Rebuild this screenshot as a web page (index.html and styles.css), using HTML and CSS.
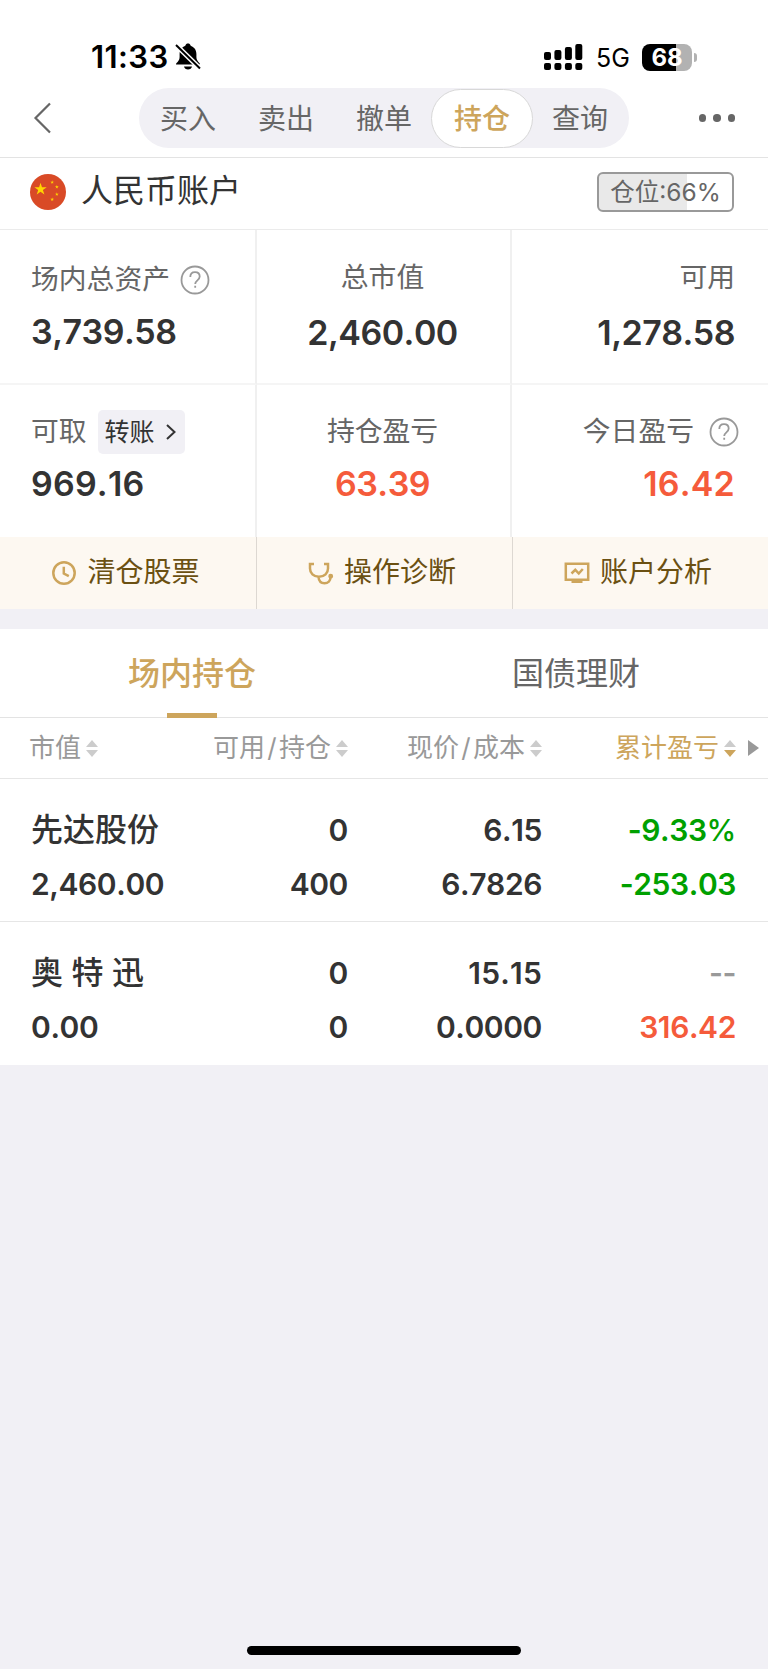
FILE: index.html
```html
<!DOCTYPE html>
<html lang="zh-CN">
<head>
    <meta charset="UTF-8">
    <meta name="viewport" content="width=device-width, initial-scale=1.0">
    <title>持仓</title>
    <link rel="stylesheet" href="styles.css">
</head>
<body>
    <header>
        <div class="status-bar">
            <div class="status-left">
                <span class="time">11:33</span>
                <svg class="bell" width="26" height="28" viewBox="0 0 26 28">
                    <path d="M1 21.500c0-2 3.600-3 3.600-7.500V11C4.600 6 8 3.600 10.300 2.800 10.800 1 11.700.5 13 .5s2.200.5 2.700 2.300C18 3.600 21.400 6 21.400 11v3c0 4.500 3.600 5.500 3.600 7.500z"/>
                    <path d="M9 23.500h8c-.4 1.800-2 3-4 3s-3.600-1.200-4-3z"/>
                    <path d="M1 2l24 23.500" stroke="#fff" stroke-width="5"/>
                    <path d="M1 2l24 23.500" stroke="#000" stroke-width="2"/>
                </svg>
            </div>
            <div class="status-right">
                <svg class="signal" width="40" height="28" viewBox="0 0 40 28">
                    <rect x="0" y="9" width="7" height="8" rx="2"/>
                    <rect x="10.400" y="7" width="7" height="10" rx="2"/>
                    <rect x="20.900" y="4" width="7" height="13" rx="2"/>
                    <rect x="31.300" y="1" width="7" height="16" rx="2"/>
                    <rect x="0" y="20" width="7" height="7" rx="2"/>
                    <rect x="10.400" y="20" width="7" height="7" rx="2"/>
                    <rect x="20.900" y="20" width="7" height="7" rx="2"/>
                    <rect x="31.300" y="20" width="7" height="7" rx="2"/>
                </svg>
                <span class="network">5G</span>
                <span class="battery">68</span>
                <span class="battery-tip"></span>
            </div>
        </div>

        <nav>
            <a href="#" class="back">
                <svg width="20" height="32" viewBox="0 0 20 32">
                    <path d="M17 1.500L2.500 16 17 30.500" fill="none" stroke="#666" stroke-width="2.200"/>
                </svg>
            </a>
            <ul>
                <li><a href="#">买入</a></li>
                <li><a href="#">卖出</a></li>
                <li><a href="#">撤单</a></li>
                <li class="active"><a href="#">持仓</a></li>
                <li><a href="#">查询</a></li>
            </ul>
            <div class="more"><i></i><i></i><i></i></div>
        </nav>
    </header>

    <div class="account">
        <svg class="flag" width="36" height="36" viewBox="0 0 36 36">
            <circle cx="18" cy="18" r="18" fill="#d94a26"/>
            <g fill="#ffd500">
                <path id="star" d="M10.500 8.700l1.500 4.500h4.700l-3.800 2.800 1.500 4.500-3.900-2.800-3.800 2.800 1.500-4.500-3.800-2.800h4.700z"/>
                <use href="#star" transform="translate(19 3.700) scale(.3)"/>
                <use href="#star" transform="translate(23.700 8.400) scale(.3)"/>
                <use href="#star" transform="translate(23.700 15.700) scale(.3)"/>
                <use href="#star" transform="translate(19 20.900) scale(.3)"/>
            </g>
        </svg>
        <span class="account-name">人民币账户</span>
        <span class="position">仓位:66%</span>
    </div>

    <div class="assets">
        <div class="asset">
            <div class="label">场内总资产
                <svg class="help" width="30" height="30" viewBox="0 0 30 30">
                    <circle cx="15" cy="15" r="13.500"/>
                    <path d="M10.300 12c0-3 2-4.800 4.700-4.800s4.700 1.700 4.700 4.400c0 3.600-4.500 3.900-4.500 7.400M15.200 20.800v2"/>
                </svg>
            </div>
            <div class="value">3,739.58</div>
        </div>
        <div class="asset center low">
            <div class="label">总市值</div>
            <div class="value">2,460.00</div>
        </div>
        <div class="asset right low">
            <div class="label">可用</div>
            <div class="value">1,278.58</div>
        </div>
        <div class="asset">
            <div class="label">可取
                <a href="#" class="transfer">转账
                    <svg width="10" height="18" viewBox="0 0 10 18">
                        <path d="M1 2l7.500 7L1 16" fill="none" stroke="#333" stroke-width="2"/>
                    </svg>
                </a>
            </div>
            <div class="value wide">969.16</div>
        </div>
        <div class="asset center">
            <div class="label">持仓盈亏</div>
            <div class="value red">63.39</div>
        </div>
        <div class="asset right">
            <div class="label">今日盈亏
                <svg class="help" width="30" height="30" viewBox="0 0 30 30">
                    <circle cx="15" cy="15" r="13.500"/>
                    <path d="M10.300 12c0-3 2-4.800 4.700-4.800s4.700 1.700 4.700 4.400c0 3.600-4.500 3.900-4.500 7.400M15.200 20.800v2"/>
                </svg>
            </div>
            <div class="value red wide">16.42</div>
        </div>
    </div>

    <div class="actions">
        <a href="#">
            <svg width="26" height="26" viewBox="0 0 26 26">
                <circle cx="13" cy="13" r="10.700"/>
                <path d="M12.800 6.800v6.700l5 2.700"/>
            </svg>
            清仓股票
        </a>
        <a href="#">
            <svg width="26" height="26" viewBox="0 0 26 26">
                <path d="M6 4H2v4.500c0 4.800 3.500 8.300 9 8.300s9-3.500 9-8.300V4h-4M10.500 17c.3 4 2.500 6.300 6 6.300s6-2.500 6-6.300"/>
                <circle cx="22.700" cy="16.300" r="1.200" fill="#cda55c"/>
            </svg>
            操作诊断
        </a>
        <a href="#">
            <svg width="26" height="26" viewBox="0 0 26 26">
                <path d="M1.800 3.700h22.400v16H1.800zM7.500 13.500l3.800-3.700 3.500 3.700 4-4.500"/>
                <path d="M7.500 20h11v3h-11z" fill="#cda55c" stroke="none"/>
            </svg>
            账户分析
        </a>
    </div>

    <div class="tabs">
        <a href="#" class="active">场内持仓</a>
        <a href="#">国债理财</a>
    </div>

    <div class="holdings">
        <div class="row head">
            <div>市值<span class="sort"></span></div>
            <div>可用<b>/</b>持仓<span class="sort"></span></div>
            <div>现价<b>/</b>成本<span class="sort"></span></div>
            <div class="gold">累计盈亏<span class="sort down"></span></div>
            <span class="next"></span>
        </div>
        <div class="row">
            <div><p class="name">先达股份</p><p>2,460.00</p></div>
            <div><p>0</p><p>400</p></div>
            <div><p>6.15</p><p>6.7826</p></div>
            <div class="green"><p>-9.33<span class="percent">%</span></p><p>-253.03</p></div>
        </div>
        <div class="row">
            <div><p class="name">奥 特 迅</p><p>0.00</p></div>
            <div><p>0</p><p>0</p></div>
            <div><p class="wide">15.15</p><p>0.0000</p></div>
            <div><p class="gray">--</p><p class="red">316.42</p></div>
        </div>
    </div>

    <div class="home-bar"></div>
</body>
</html>
```
FILE: styles.css
```css
* {
    box-sizing: border-box;
}

body {
    font-family: Inter, "Noto Sans CJK SC", sans-serif;
    line-height: 1.2;
    margin: 0;
    padding: 0;
    min-height: 1669px;
    display: flex;
    flex-direction: column;
    background-color: #f1f0f5;
    color: #333;
}

a {
    color: inherit;
    text-decoration: none;
}

svg {
    flex: none;
    display: block;
}

header {
    height: 158px;
    background-color: #fff;
    border-bottom: 1px solid #e3e3e3;
}

.status-bar {
    height: 88px;
    padding: 26px 71px 0 91px;
    display: flex;
    justify-content: space-between;
    align-items: center;
    color: #000;
}

.status-left,
.status-right {
    display: flex;
    align-items: center;
}

.time {
    width: 84px;
    font-size: 31px;
    font-weight: 600;
    letter-spacing: 0.4px;
}

.network {
    width: 46px;
    margin-left: 12px;
    padding-top: 1px;
    font-size: 25px;
}

.battery {
    width: 50px;
    height: 27px;
    border-radius: 8px;
    background: linear-gradient(to right, #000 69%, #b2b2b2 69%);
    color: #fff;
    font-size: 24px;
    font-weight: 700;
    line-height: 28px;
    text-align: center;
}

.battery-tip {
    width: 3px;
    height: 9px;
    margin-left: 2px;
    border-radius: 0 3px 3px 0;
    background-color: #b2b2b2;
}

nav {
    height: 60px;
    padding: 0 33px;
    display: flex;
    justify-content: space-between;
    align-items: center;
}

.back {
    width: 106px;
}

nav ul {
    list-style-type: none;
    margin: 0;
    padding: 0;
    width: 490px;
    height: 60px;
    border-radius: 30px;
    display: flex;
    justify-content: center;
    background-color: #f1f0f5;
}

nav ul li {
    width: 98px;
    line-height: 62px;
    text-align: center;
    font-size: 28px;
    color: #666;
}

nav ul li.active {
    width: 102px;
    height: 59px;
    margin: 1px -2px 0;
    border: 1px solid #d8d8d8;
    border-radius: 30px;
    line-height: 58px;
    background-color: #fff;
    color: #cda55c;
    font-weight: 500;
}

.more {
    width: 106px;
    display: flex;
    justify-content: flex-end;
    gap: 7px;
}

.more i {
    width: 7.500px;
    height: 7.500px;
    border-radius: 50%;
    background-color: #666;
}

.account {
    height: 71px;
    padding: 0 34px 4px 30px;
    display: flex;
    align-items: center;
    background-color: #fff;
}

.account-name {
    margin-left: 15px;
    font-size: 32px;
}

.position {
    width: 137px;
    height: 40px;
    margin-left: auto;
    border: 2px solid #999;
    border-radius: 6px;
    background: linear-gradient(to right, #e9e9e9 66%, #fff 66%);
    color: #666;
    font-size: 24.500px;
    line-height: 36px;
    text-align: center;
}

.assets {
    display: grid;
    grid-template-columns: 257px 255px 256px;
    grid-template-rows: 155px 152px;
    background-color: #fff;
    border-top: 1px solid #ebebeb;
}

.asset {
    padding: 26px 33px 0 31px;
    border-right: 2px solid #f0f0f0;
    display: flex;
    flex-direction: column;
}

.asset:nth-child(3n) {
    border-right: none;
}

.asset:nth-child(-n+3) {
    border-bottom: 2px solid #f5f5f5;
    padding-top: 29px;
}

.asset .label {
    height: 42px;
    display: flex;
    align-items: center;
    font-size: 27.800px;
    white-space: nowrap;
    color: #666;
}

.asset .value {
    margin-top: 11px;
    font-size: 34px;
    line-height: 40px;
    font-weight: 600;
    font-kerning: none;
    letter-spacing: -0.5px;
}

.asset.low:nth-child(-n+3) {
    padding-top: 27px;
}

.low .value {
    margin-top: 14px;
}

.asset .wide,
.row .wide {
    letter-spacing: 0.2px;
}

.asset.center {
    align-items: center;
    padding-left: 0;
    padding-right: 2px;
}

.right {
    align-items: flex-end;
}

.right .help {
    margin-left: 15px;
    margin-right: -4px;
}

.help {
    margin-left: 10px;
    fill: none;
    stroke: #999;
    stroke-width: 1.800;
}

.transfer {
    width: 87px;
    height: 44px;
    margin-left: 11px;
    padding: 0 9px 0 7px;
    display: flex;
    justify-content: space-between;
    align-items: center;
    border-radius: 5px;
    background-color: #f1f0f5;
    color: #333;
    font-size: 25px;
}

.red {
    color: #f55b3b;
}

.green {
    color: #00a000;
}

.gold {
    color: #cda55c;
}

.gray {
    color: #999;
}

.actions {
    height: 72px;
    display: grid;
    grid-template-columns: 257px 256px 255px;
    background-color: #fdf8f1;
    color: #6b5012;
}

.actions a {
    display: flex;
    align-items: center;
    justify-content: center;
    gap: 10px;
    padding-right: 5px;
    border-right: 1px solid #ddd8d2;
    font-size: 28px;
}

.actions a:last-child {
    border-right: none;
}

.actions svg {
    fill: none;
    stroke: #cda55c;
    stroke-width: 2.500;
}

.tabs {
    height: 89px;
    margin-top: 20px;
    display: flex;
    background-color: #fff;
    border-bottom: 1px solid #e3e3e3;
}

.tabs a {
    flex: 1;
    position: relative;
    line-height: 90px;
    text-align: center;
    font-size: 32px;
    color: #666;
}

.tabs a.active {
    color: #cda55c;
    font-weight: 500;
}

.tabs a.active::after {
    content: "";
    position: absolute;
    left: 167px;
    bottom: -1px;
    width: 50px;
    height: 5px;
    background-color: #cda55c;
}

.row {
    height: 143px;
    padding: 24px 32px 0 31px;
    display: grid;
    grid-template-columns: 150px 167px 194px 194px;
    text-align: right;
    background-color: #fff;
    border-bottom: 1px solid #e6e6e6;
}

.row > div:first-child {
    text-align: left;
}

.row p {
    height: 54px;
    margin: 0;
    font-size: 30px;
    line-height: 54px;
    font-weight: 600;
    font-kerning: none;
    letter-spacing: -0.4px;
    white-space: nowrap;
}

.row .name {
    font-size: 32px;
    font-weight: 500;
    letter-spacing: 0;
}

.row .percent {
    font-weight: 500;
}

.row:last-child {
    border-bottom: none;
}

.row.head {
    height: 61px;
    padding-top: 0;
    position: relative;
    align-items: center;
    font-size: 26px;
    color: #999;
}

.head div {
    display: flex;
    align-items: center;
    justify-content: flex-end;
    white-space: nowrap;
}

.head div:first-child {
    justify-content: flex-start;
    margin-left: -2px;
}

.head .gold {
    color: #cda55c;
}

.head b {
    width: 14px;
    text-align: center;
    font-weight: 400;
}

.sort {
    margin-left: 5px;
}

.sort::before,
.sort::after {
    content: "";
    display: block;
    border: 6px solid transparent;
}

.sort::before {
    border-top: none;
    border-bottom: 7.500px solid #ccc;
}

.sort::after {
    margin-top: 3px;
    border-bottom: none;
    border-top: 7.500px solid #ccc;
}

.sort.down::after {
    border-top-color: #cda55c;
}

.next {
    position: absolute;
    right: 9px;
    top: 22px;
    border: 8px solid transparent;
    border-right: none;
    border-left: 11px solid #999;
}

.home-bar {
    width: 274px;
    height: 9px;
    margin: auto auto 14px;
    border-radius: 5px;
    background-color: #000;
}
```
